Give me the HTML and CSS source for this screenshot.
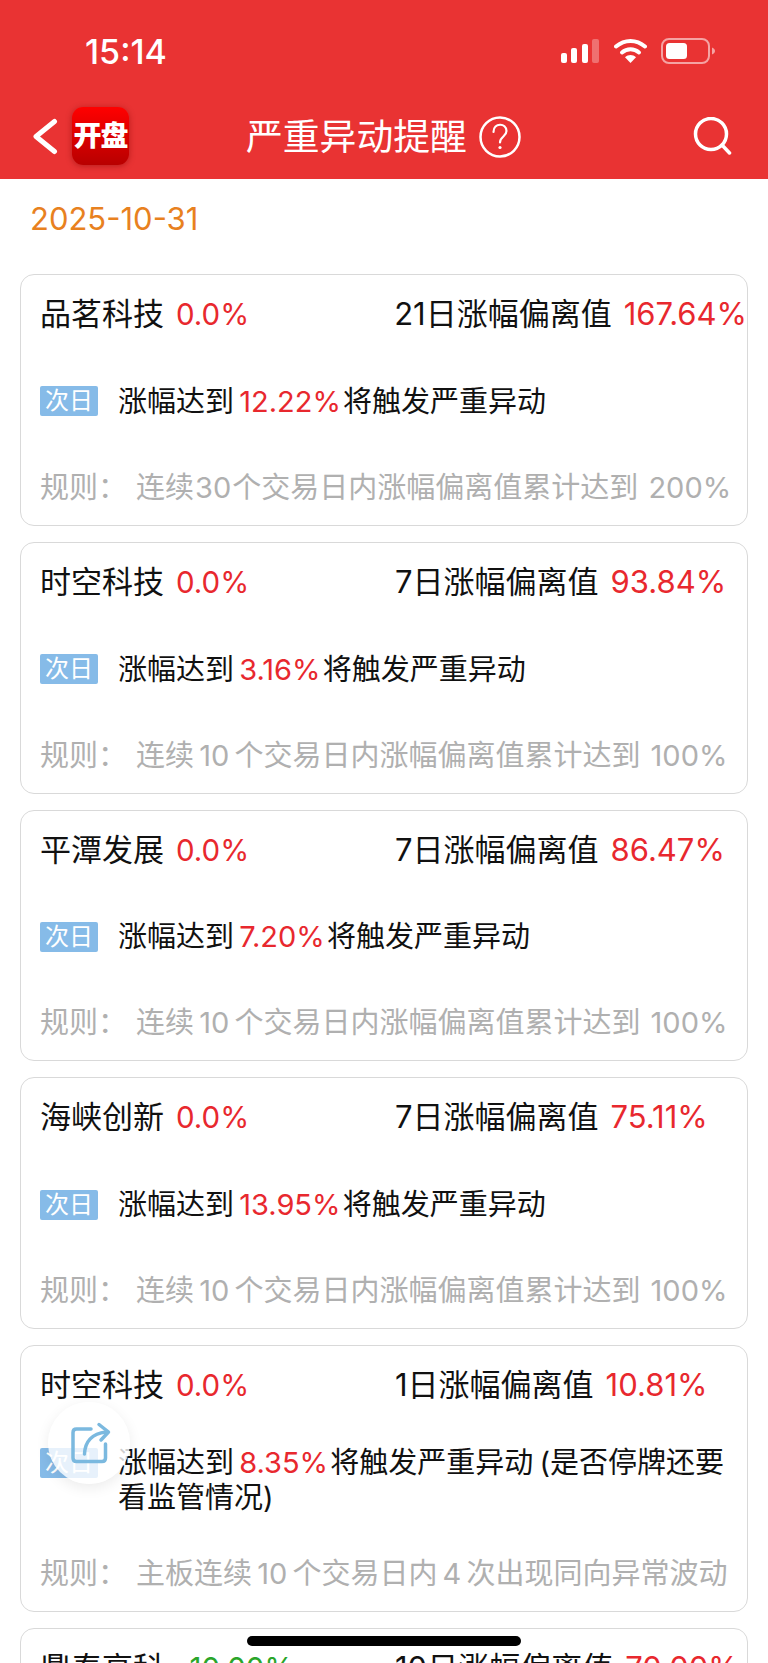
FILE: index.html
```html
<!DOCTYPE html>
<html lang="zh-CN">
<head>
    <meta charset="UTF-8">
    <meta name="viewport" content="width=device-width, initial-scale=1.0">
    <link rel="stylesheet" href="styles.css">
    <title>严重异动提醒</title>
</head>
<body>
    <div class="screen">
        <header class="top-bar">
            <div class="status-bar">
                <span class="clock">15:14</span>
                <div class="status-icons">
                    <svg class="signal" width="38" height="24" viewBox="0 0 38 24">
                        <rect x="0" y="14" width="6" height="10" rx="2" fill="#fff"/>
                        <rect x="10" y="9" width="6" height="15" rx="2" fill="#fff"/>
                        <rect x="21" y="5" width="6" height="19" rx="2" fill="#fff"/>
                        <rect x="31" y="0" width="7" height="24" rx="2" fill="#fff" fill-opacity=".3"/>
                    </svg>
                    <svg class="wifi" width="33" height="25" viewBox="0 0 33 25">
                        <path d="M2 8.5C10.500 1 22.500 1 31 8.500" fill="none" stroke="#fff" stroke-width="4" stroke-linecap="round"/>
                        <path d="M8 14.500C13 10.300 20 10.300 25 14.500" fill="none" stroke="#fff" stroke-width="4" stroke-linecap="round"/>
                        <path d="M11 19.200C14.200 16.400 18.800 16.400 22 19.200L16.500 25Z" fill="#fff"/>
                    </svg>
                    <svg class="battery" width="55" height="26" viewBox="0 0 55 26">
                        <rect x="1" y="1" width="47" height="24" rx="7" fill="none" stroke="#fff" stroke-opacity=".55" stroke-width="2"/>
                        <rect x="5" y="5" width="21" height="16" rx="3.500" fill="#fff"/>
                        <path d="M51 9.500C53 10.500 54 11.500 54 13C54 14.500 53 15.500 51 16.500Z" fill="#fff" fill-opacity=".55"/>
                    </svg>
                </div>
            </div>
            <nav class="nav-bar">
                <svg class="back-icon" width="26" height="37" viewBox="0 0 26 37">
                    <path d="M22.500 3.500L4 18.500L22.500 33.500" fill="none" stroke="#fff" stroke-width="5" stroke-linecap="round" stroke-linejoin="round"/>
                </svg>
                <div class="logo">开盘</div>
                <div class="nav-title">
                    <span>严重异动提醒</span>
                    <svg width="42" height="42" viewBox="0 0 42 42">
                        <circle cx="21" cy="21" r="19.500" fill="none" stroke="#fff" stroke-width="2.500"/>
                        <path d="M14.500 16C14.500 6.500 27.500 6.500 27.500 15C27.500 20.500 21 20.500 21 26.500" fill="none" stroke="#fff" stroke-width="2.200" stroke-linecap="round"/>
                        <circle cx="21" cy="31.500" r="1.600" fill="#fff"/>
                    </svg>
                </div>
                <svg class="search-icon" width="39" height="38" viewBox="0 0 39 38">
                    <circle cx="18" cy="17" r="15.500" fill="none" stroke="#fff" stroke-width="3.500"/>
                    <path d="M29 28L36.500 36" fill="none" stroke="#fff" stroke-width="3.500" stroke-linecap="round"/>
                </svg>
            </nav>
        </header>

        <div class="date">2025-10-31</div>

        <div class="card-list">
            <div class="card">
                <div class="card-head">
                    <div class="stock"><span>品茗科技</span><span class="up">0.0%</span></div>
                    <div class="deviation"><span><span class="num">21</span>日涨幅偏离值</span><span class="up">167.64%</span></div>
                </div>
                <div class="card-body">
                    <div class="body-line">
                        <span class="tag">次日</span>
                        <p>涨幅达到 <span class="up">12.22%</span> 将触发严重异动</p>
                    </div>
                </div>
                <div class="card-rule"><span>规则：</span><span>连续<span class="rule-num">30</span>个交易日内涨幅偏离值累计达到<span class="rule-end"> 200%</span></span></div>
            </div>

            <div class="card">
                <div class="card-head">
                    <div class="stock"><span>时空科技</span><span class="up">0.0%</span></div>
                    <div class="deviation"><span><span class="num">7</span>日涨幅偏离值</span><span class="up">93.84%</span></div>
                </div>
                <div class="card-body">
                    <div class="body-line">
                        <span class="tag">次日</span>
                        <p>涨幅达到 <span class="up">3.16%</span> 将触发严重异动</p>
                    </div>
                </div>
                <div class="card-rule"><span>规则：</span><span>连续 10 个交易日内涨幅偏离值累计达到<span class="rule-end"> 100%</span></span></div>
            </div>

            <div class="card">
                <div class="card-head">
                    <div class="stock"><span>平潭发展</span><span class="up">0.0%</span></div>
                    <div class="deviation"><span><span class="num">7</span>日涨幅偏离值</span><span class="up">86.47%</span></div>
                </div>
                <div class="card-body">
                    <div class="body-line">
                        <span class="tag">次日</span>
                        <p>涨幅达到 <span class="up">7.20%</span> 将触发严重异动</p>
                    </div>
                </div>
                <div class="card-rule"><span>规则：</span><span>连续 10 个交易日内涨幅偏离值累计达到<span class="rule-end"> 100%</span></span></div>
            </div>

            <div class="card">
                <div class="card-head">
                    <div class="stock"><span>海峡创新</span><span class="up">0.0%</span></div>
                    <div class="deviation"><span><span class="num">7</span>日涨幅偏离值</span><span class="up">75.11%</span></div>
                </div>
                <div class="card-body">
                    <div class="body-line">
                        <span class="tag">次日</span>
                        <p>涨幅达到 <span class="up">13.95%</span> 将触发严重异动</p>
                    </div>
                </div>
                <div class="card-rule"><span>规则：</span><span>连续 10 个交易日内涨幅偏离值累计达到<span class="rule-end"> 100%</span></span></div>
            </div>

            <div class="card">
                <div class="card-head">
                    <div class="stock"><span>时空科技</span><span class="up">0.0%</span></div>
                    <div class="deviation"><span><span class="num">1</span>日涨幅偏离值</span><span class="up">10.81%</span></div>
                </div>
                <div class="card-body">
                    <div class="body-line">
                        <span class="tag">次日</span>
                        <p>涨幅达到 <span class="up">8.35%</span> 将触发严重异动 (是否停牌还要看监管情况)</p>
                    </div>
                </div>
                <div class="card-rule"><span>规则：</span><span>主板连续 10 个交易日内 4 次出现同向异常波动</span></div>
            </div>

            <div class="card">
                <div class="card-head">
                    <div class="stock"><span>鼎泰高科</span><span class="down">-10.00%</span></div>
                    <div class="deviation"><span><span class="num">10</span>日涨幅偏离值</span><span class="up">70.00%</span></div>
                </div>
            </div>
        </div>

        <!-- floating share button -->
        <div class="share-button">
            <svg width="42" height="42" viewBox="0 0 42 42">
                <path d="M21 7H6.500Q3 7 3 10.500V36Q3 39.500 6.500 39.500H32Q35.500 39.500 35.500 36V22" fill="none" stroke="#7bb9df" stroke-width="3.500" stroke-linecap="round"/>
                <path d="M14.500 32C15 20 22 11.500 36 10" fill="none" stroke="#7bb9df" stroke-width="3.500" stroke-linecap="round"/>
                <path d="M29 2.500L38.500 10L31 18" fill="none" stroke="#7bb9df" stroke-width="3.500" stroke-linecap="round" stroke-linejoin="round"/>
            </svg>
        </div>

        <div class="home-indicator"></div>
    </div>
</body>
</html>
```

FILE: styles.css
```css
* {
    box-sizing: border-box;
}

html, body {
    margin: 0;
    padding: 0;
}

body {
    font-family: 'Inter', 'Noto Sans CJK SC', sans-serif;
    color: #111;
    background: #fff;
}

.screen {
    position: relative;
    width: 768px;
    height: 1663px;
    overflow: hidden;
}

/* red header with status bar and nav */
.top-bar {
    height: 179px;
    background: #e93333;
    color: #fff;
}

.status-bar {
    height: 99px;
    display: flex;
    justify-content: space-between;
    padding: 38px 52px 0 85px;
}

.clock {
    font-size: 34px;
    font-weight: 500;
    line-height: 28px;
}

.status-icons {
    display: flex;
    align-items: flex-start;
}

.signal {
    margin-right: 15px;
    margin-top: 1px;
}

.wifi {
    margin-right: 14px;
}

.nav-bar {
    display: flex;
    align-items: center;
    height: 75px;
    padding-left: 32px;
}

.logo {
    width: 57px;
    height: 58px;
    margin-left: 14px;
    margin-top: -1px;
    border-radius: 11px;
    background: linear-gradient(#ff0000, #b80000);
    box-shadow: 0 1px 6px rgba(120, 0, 0, .45);
    color: #fff;
    font-size: 28px;
    font-weight: 900;
    letter-spacing: -1px;
    line-height: 58px;
    text-align: center;
    white-space: nowrap;
}

.nav-title {
    display: flex;
    align-items: center;
    gap: 12px;
    margin-left: 117px;
    font-size: 36.800px;
    line-height: 42px;
    white-space: nowrap;
}

.search-icon {
    margin-left: auto;
    margin-right: 36px;
    margin-top: -1px;
}

.date {
    padding: 22px 0 0 30px;
    height: 95px;
    color: #e8811f;
    font-size: 31px;
    line-height: 36px;
}

.card-list {
    display: flex;
    flex-direction: column;
    gap: 16px;
    padding: 0 20px;
}

.card {
    flex: none;
    border: 1px solid #d9d9d9;
    border-radius: 14px;
    padding: 21px 0 20px 19px;
}

.card-head {
    display: flex;
    height: 35px;
    font-size: 31px;
    line-height: 35px;
    white-space: nowrap;
}

.stock .up,
.stock .down {
    font-size: 29.500px;
}

.stock {
    display: flex;
    align-items: baseline;
    gap: 12px;
    width: 355px;
}

.deviation {
    display: flex;
    align-items: baseline;
    gap: 12px;
}

.up {
    color: #e8282e;
}

.down {
    color: #2aa52a;
}

.card-body {
    display: flex;
    align-items: center;
    min-height: 54.750px;
    margin: 43px 20px 41px 0;
}

.body-line {
    display: flex;
    align-items: flex-start;
}

.tag {
    flex: none;
    width: 58px;
    height: 30px;
    margin-top: 2.500px;
    border-radius: 2px;
    background: #86bbe8;
    color: #fff;
    font-size: 24px;
    line-height: 30px;
    text-align: center;
}

.body-line p {
    margin: 0 0 0 20px;
    font-size: 29px;
    line-height: 35px;
    word-spacing: -2px;
}

.body-line .up {
    margin: 0 -4px 0 -1px;
}

.card-rule {
    display: flex;
    gap: 9px;
    color: #b0b0b0;
    font-size: 29px;
    line-height: 35px;
    word-spacing: -3px;
    white-space: nowrap;
}

.rule-num {
    margin: 0 1px;
}

.rule-end {
    margin-left: 5px;
}

.share-button {
    position: absolute;
    left: 48px;
    top: 1402px;
    width: 82px;
    height: 82px;
    display: flex;
    align-items: center;
    justify-content: center;
    padding-left: 4px;
    border-radius: 50%;
    background: rgba(255, 255, 255, .8);
    box-shadow: 0 4px 14px rgba(0, 0, 0, .08);
}

.home-indicator {
    position: absolute;
    left: 247px;
    top: 1636px;
    width: 274px;
    height: 10px;
    border-radius: 5px;
    background: #000;
}
```
